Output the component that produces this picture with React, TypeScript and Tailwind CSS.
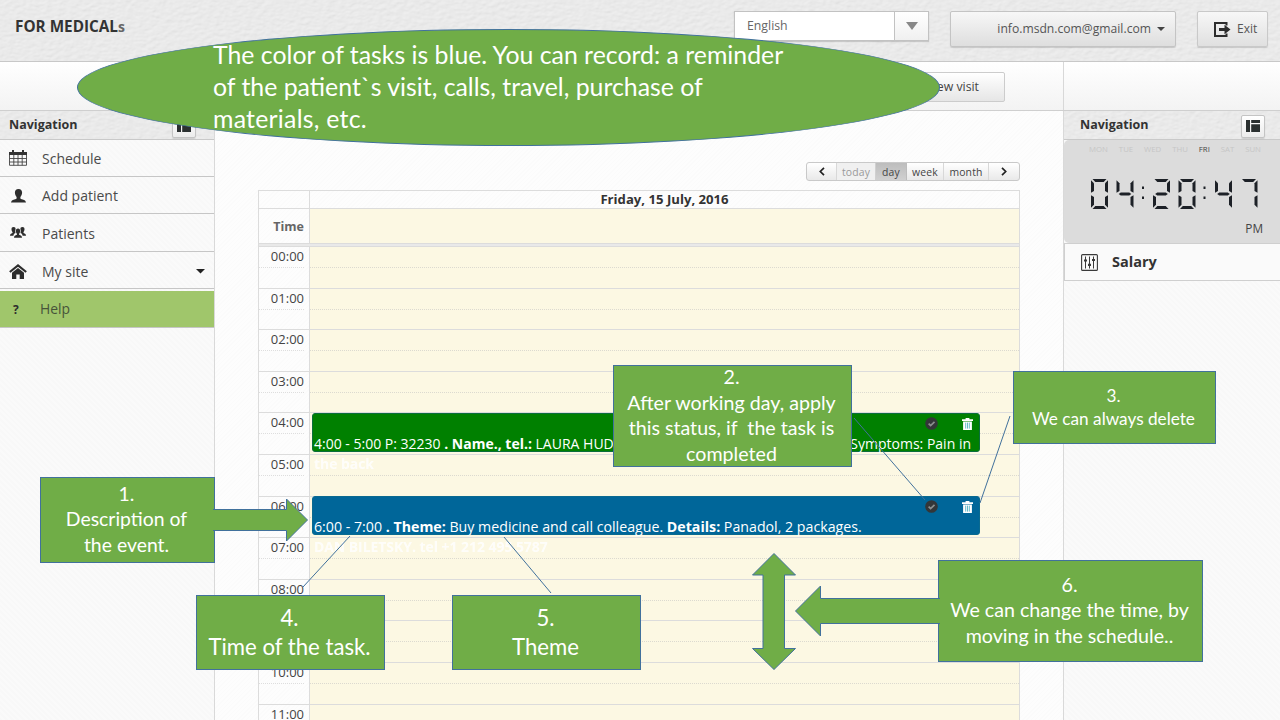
import type { ReactNode } from "react";

function Leather({ id }: { id: string }) {
  return (
    <svg className="absolute inset-0 h-full w-full" aria-hidden="true">
      <filter id={id} x="0" y="0" width="100%" height="100%">
        <feTurbulence type="fractalNoise" baseFrequency="0.16 0.28" numOctaves="2" seed="4" result="noise" />
        <feDiffuseLighting in="noise" lightingColor="#ffffff" surfaceScale="0.7" diffuseConstant="1.05">
          <feDistantLight azimuth="235" elevation="58" />
        </feDiffuseLighting>
      </filter>
      <rect width="100%" height="100%" fill="#e6e6e6" />
      <rect width="100%" height="100%" filter={`url(#${id})`} opacity="0.35" />
    </svg>
  );
}

function CalendarIcon() {
  return (
    <svg width="18" height="16" viewBox="0 0 18 16" fill="#333">
      <path d="M0 2h3V0h2v2h8V0h2v2h3v3H0z" />
      <path d="M.5 5v10.300h17V5M.5 8.500h17M.5 12h17M4.800 5v10.300M9 5v10.300M13.200 5v10.300" fill="none" stroke="#444" strokeWidth=".9" />
    </svg>
  );
}

function PersonIcon() {
  return (
    <svg width="15" height="14" viewBox="0 0 15 14" fill="#2d2d2d">
      <path d="M7.500 0C9.900 0 11.100 1.500 11.100 3.600c0 1.700-.8 3.500-1.700 4.400v1.200c0 .6 1 .9 2.300 1.300 2 .6 3 1.200 3.300 3.100H0c.3-1.900 1.300-2.500 3.300-3.100 1.300-.4 2.300-.7 2.300-1.300V8C4.700 7.100 3.900 5.300 3.900 3.600 3.900 1.500 5.100 0 7.500 0z" />
    </svg>
  );
}

function PeopleIcon() {
  return (
    <svg width="16" height="12" viewBox="0 0 16 12" fill="#2d2d2d">
      <path d="M3.600 0c1.500 0 2 .9 2 2.200-.6.900-.6 2.300 0 3.800-1 .4-1.900.8-2.200 2.700H0C0 7 .9 6.600 2.500 6V5C1.900 4.400 1.500 3.400 1.500 2.300 1.500.9 2.100 0 3.600 0z" />
      <path d="M12.400 0c-1.500 0-2 .9-2 2.200.6.900.6 2.300 0 3.800 1 .4 1.900.8 2.200 2.700H16C16 7 15.100 6.600 13.500 6V5c.6-.6 1-1.600 1-2.700C14.500.9 13.900 0 12.400 0z" />
      <path d="M8 1.500c1.500 0 2.200 1 2.200 2.500 0 1.200-.5 2.200-1.100 2.800v1c1.600.6 2.900 1 2.900 3H4c0-2 1.300-2.400 2.900-3v-1C6.300 6.200 5.800 5.200 5.800 4c0-1.500.7-2.500 2.200-2.500z" />
    </svg>
  );
}

function HomeIcon() {
  return (
    <svg width="18" height="15" viewBox="0 0 18 15">
      <path d="M.8 8 9 1.400 17.200 8" fill="none" stroke="#2d2d2d" strokeWidth="2.100" />
      <path d="M3 8.800 9 4l6 4.800V15h-4.300v-4.500H7.300V15H3z" fill="#2d2d2d" />
    </svg>
  );
}

function PanelIcon() {
  return (
    <svg width="14" height="12" viewBox="0 0 14 12" fill="#2b3030">
      <path d="M0 0h4v12H0zM5.200 0H14v3H5.200zM5.200 4.200H14V12H5.200z" />
    </svg>
  );
}

function ExitIcon() {
  return (
    <svg width="17" height="15" viewBox="0 0 17 15">
      <path d="M12.500 3.600V1H1v13h11.500v-2.600" fill="none" stroke="#2d2d2d" strokeWidth="2" />
      <path d="M5 5.900h5.500V2.800l6 4.700-6 4.700V9.100H5z" fill="#2d2d2d" />
    </svg>
  );
}

function SlidersIcon() {
  return (
    <svg width="17" height="17" viewBox="0 0 17 17" fill="none" stroke="#3a3a3a">
      <rect x=".6" y=".6" width="15.800" height="15.800" rx="1" strokeWidth="1.100" />
      <path d="M4.500 2.500v12M8.500 2.500v12M12.500 2.500v12" strokeWidth="1" />
      <path d="M3 6.500h3M7 10.800h3M11 6h3" strokeWidth="2.200" />
    </svg>
  );
}

function CheckIcon() {
  return (
    <svg width="13" height="13" viewBox="0 0 13 13">
      <circle cx="6.500" cy="6.500" r="6.300" fill="#333638" />
      <path d="m3.600 6.700 2 1.800 3.900-3.600" fill="none" stroke="#8b8f8f" strokeWidth="1.700" />
    </svg>
  );
}

function TrashIcon() {
  return (
    <svg width="11" height="12" viewBox="0 0 11 12">
      <path d="M3.600 0h3.800v1.200H11v1.900H0V1.200h3.600zM1.100 3.600h8.800V12H1.100z" fill="#fff" />
      <path d="M3.700 4.600v6M5.500 4.600v6M7.300 4.600v6" stroke="#3fa9bd" strokeWidth=".8" />
    </svg>
  );
}

function NavHeader({ id, gap }: { id: string; gap: string }) {
  return (
    <div className={`relative flex h-[29px] items-center justify-between border-b border-[#c9c9c9] ${gap}`}>
      <Leather id={id} />
      <span className="relative text-[12.5px] font-bold text-[#333]">Navigation</span>
      <span className="relative mt-[2px] flex h-[23px] w-[24px] items-center justify-center rounded-[2px] border border-[#c4c4c4] bg-linear-to-b from-white to-[#ececec] shadow-[0_1px_1px_rgba(0,0,0,0.12)]">
        <PanelIcon />
      </span>
    </div>
  );
}

function NavItem({ icon, label, arrow }: { icon: ReactNode; label: string; arrow?: boolean }) {
  return (
    <li className="flex h-[37.6px] items-center border-b border-[#c6c6c6] pt-[2px] pr-[9px] pl-[9px] text-[14px] text-[#4a4a4a]">
      <span className="flex w-[33px] items-center">{icon}</span>
      <span className="flex-1">{label}</span>
      {arrow && (
        <svg width="9" height="5" viewBox="0 0 9 5">
          <path d="M0 0h9L4.500 4.500z" fill="#222" />
        </svg>
      )}
    </li>
  );
}

const SEGMENTS: Record<string, string> = {
  a: "M1.500 0h14l-2.800 3H4.300z",
  b: "M17 1.200v12.600l-3-1.800V4.200z",
  c: "M17 16.200v12.600l-3-3V18z",
  d: "M1.500 30h14l-2.800-3H4.300z",
  e: "M0 16.200v12.600l3-3V18z",
  f: "M0 1.200v12.600L3 12V4.200z",
  g: "M2.200 15l2-1.500h8.600l2 1.500-2 1.500H4.200z",
};
const DIGITS: Record<string, string> = { "0": "abcdef", "2": "abged", "4": "fgbc", "7": "abc" };

function Clock() {
  const glyphs: [string, number][] = [
    ["0", 0], ["4", 25.500], ["2", 62], ["0", 87.500], ["4", 124], ["7", 149.500],
  ];
  return (
    <svg width="167" height="30" viewBox="0 0 167 30" fill="#1d2127" role="img" aria-label="04:20:47">
      {glyphs.map(([digit, x], i) => (
        <g key={i} transform={`translate(${x} 0)`}>
          {DIGITS[digit].split("").map((s) => (
            <path key={s} d={SEGMENTS[s]} />
          ))}
        </g>
      ))}
      <path d="M51 7.500h2v2.500h-2zM51 17.500h2v2.500h-2zM112.500 7.500h2v2.500h-2zM112.500 17.500h2v2.500h-2z" />
    </svg>
  );
}

const HOURS = ["00:00", "01:00", "02:00", "03:00", "04:00", "05:00", "06:00", "07:00", "08:00", "09:00", "10:00", "11:00"];

function CalendarEvent({ place, children, overflow }: { place: string; children: ReactNode; overflow: string }) {
  return (
    <div className={`absolute left-[53px] h-[39px] w-[668px] rounded-[3px] border whitespace-pre text-white ${place}`}>
      <div className="flex h-full flex-col justify-between">
        <div className="flex h-[19px] items-center justify-end gap-[24px] pr-[6px]">
          <CheckIcon />
          <TrashIcon />
        </div>
        <div className="flex h-[15px] items-center justify-between pr-[8px] pl-px leading-[18px]">{children}</div>
      </div>
      <div className="absolute top-[41px] left-px text-[13.900px] leading-[18px] font-bold opacity-85">{overflow}</div>
    </div>
  );
}

function Callout({ place, children }: { place: string; children: ReactNode }) {
  return (
    <div className={`absolute flex flex-col items-center justify-center border border-[#41719c] bg-[#70ad47] pr-[2px] pb-[2px] text-center font-['Lato',sans-serif] whitespace-pre text-white ${place}`}>
      {children}
    </div>
  );
}

export default function App() {
  return (
    <div className="relative flex h-[720px] w-[1280px] flex-col overflow-hidden bg-[#fcfcfc] font-['Open_Sans','Noto_Sans',sans-serif] text-[#444]">
      <header className="relative flex h-[62px] shrink-0 items-start border-b border-[#c8c8c8]">
        <Leather id="leather-top" />
        <h1 className="relative mt-[15px] ml-[15px] flex-1 text-[15.300px] leading-[23px] font-bold text-[#333]">
          FOR MEDICAL<span className="text-[14px] text-[#666]">s</span>
        </h1>
        <div className="relative mt-[11px] flex h-[30px] w-[195px] items-center border border-[#c2c2c2] bg-white shadow-[0_1px_1px_rgba(0,0,0,0.15)]">
          <span className="flex-1 pt-px pl-[12px] text-[12.300px] text-[#666]">English</span>
          <span className="flex h-full w-[34px] items-center justify-center border-l border-[#c2c2c2] bg-linear-to-b from-white to-[#f0f0f0]">
            <svg width="12" height="8" viewBox="0 0 12 8">
              <path d="M0 0h12L6 8z" fill="#888" />
            </svg>
          </span>
        </div>
        <div className="relative mt-[11px] ml-[21px] flex h-[36px] w-[226px] items-center justify-end gap-[6px] rounded-[2px] border border-[#c4c4c4] bg-linear-to-b from-[#f7f7f7] to-[#dedede] pr-[10px] shadow-[0_1px_1px_rgba(0,0,0,0.15)]">
          <span className="text-[12.150px] text-[#555]">info.msdn.com@gmail.com</span>
          <svg width="8" height="4" viewBox="0 0 8 4">
            <path d="M0 0h8L4 4z" fill="#444" />
          </svg>
        </div>
        <div className="relative mt-[11px] mr-[12px] ml-[21px] flex h-[36px] w-[71px] items-center gap-[6px] rounded-[2px] border border-[#c9c9c9] bg-linear-to-b from-[#f7f7f7] to-[#e0e0e0] pl-[16px] shadow-[0_1px_1px_rgba(0,0,0,0.15)]">
          <ExitIcon />
          <span className="text-[12px] text-[#555]">Exit</span>
        </div>
      </header>

      <div className="flex h-[49px] shrink-0 border-b border-[#cfcfcf] bg-linear-to-b from-white to-[#f3f3f3]">
        <div className="flex flex-1 items-start justify-end pr-[58px]">
          <button className="mt-[10px] h-[30px] w-[106px] rounded-[2px] border border-[#cccccc] bg-linear-to-b from-white to-[#e6e6e6] pr-[25px] text-right text-[12.300px] text-[#444]">
            New visit
          </button>
        </div>
        <div className="w-[217px] border-l border-[#d8d8d8]" />
      </div>

      <div className="flex min-h-0 flex-1">
        <aside className="w-[215px] shrink-0 border-r border-[#d9d9d9] bg-[repeating-linear-gradient(45deg,#f8f8f8_0px,#f8f8f8_2px,#fafafa_2px,#fafafa_4px)]">
          <NavHeader id="leather-left" gap="pl-[9px] pr-[18px]" />
          <ul className="-mt-px">
            <NavItem icon={<CalendarIcon />} label="Schedule" />
            <NavItem icon={<span className="pl-[2px]"><PersonIcon /></span>} label="Add patient" />
            <NavItem icon={<span className="pl-px"><PeopleIcon /></span>} label="Patients" />
            <NavItem icon={<HomeIcon />} label="My site" arrow />
          </ul>
          <div className="mt-[2px] flex h-[37px] items-center border-b border-[#c6c6c6] bg-[#a0c66b] pt-px pl-[13px] text-[13.900px] text-[#47543a]">
            <span className="w-[27px] text-[12px] font-bold text-[#2d2d2d]">?</span>Help
          </div>
        </aside>

        <main className="min-w-0 flex-1 overflow-hidden bg-[repeating-linear-gradient(135deg,#fdfdfd_0px,#fdfdfd_2px,#fbfbfb_2px,#fbfbfb_3px)] pr-[43px] pl-[43px]">
          <div className="mt-[51px] ml-auto flex h-[19px] w-[214px] rounded-[3px] border border-[#c9c9c9] bg-linear-to-b from-white to-[#e9e9e9] text-[10.400px] leading-[19px] tracking-[0.150px] text-[#444]">
            <span className="flex w-[30px] items-center justify-center border-r border-[#d8d8d8]">
              <svg width="6" height="9" viewBox="0 0 6 9" fill="none" stroke="#222" strokeWidth="1.700"><path d="M5 .8 1.300 4.500 5 8.200" /></svg>
            </span>
            <span className="w-[39px] border-r border-[#d0d0d0] bg-[#f0f0f0] text-center text-[#999]">today</span>
            <span className="w-[31px] border-r border-[#bdbdbd] bg-linear-to-b from-[#bdbdbd] to-[#d0d0d0] text-center">day</span>
            <span className="w-[37px] border-r border-[#d8d8d8] text-center">week</span>
            <span className="w-[45px] border-r border-[#d8d8d8] text-center">month</span>
            <span className="flex flex-1 items-center justify-center">
              <svg width="6" height="9" viewBox="0 0 6 9" fill="none" stroke="#222" strokeWidth="1.700"><path d="M1 .8 4.700 4.500 1 8.200" /></svg>
            </span>
          </div>

          <section className="relative mt-[9px] border border-[#dcdcdc]">
            <div className="flex h-[18px] border-b border-[#dcdcdc]">
              <div className="w-[51px] border-r border-[#dcdcdc]" />
              <div className="flex-1 text-center text-[13.150px] leading-[17px] font-bold text-[#333]">Friday, 15 July, 2016</div>
            </div>
            <div className="flex h-[34px]">
              <div className="flex w-[51px] items-center justify-end border-r border-[#dcdcdc] pt-[3px] pr-[5px] text-[12.500px] font-bold text-[#666]">Time</div>
              <div className="flex-1 bg-[#fcf8e3]" />
            </div>
            <div className="h-[4px] border-y border-[#dcdcdc] bg-[#e9e9e9]" />
            {HOURS.map((hour) => (
              <div key={hour} className="flex h-[41.600px] border-b border-[#dcdcdc] text-[13px] leading-[19.500px] text-[#444]">
                <div className="w-[51px] border-r border-[#dcdcdc] pr-[5px] text-right">
                  <div className="h-[21px] border-b border-dotted border-[#dedede]">{hour}</div>
                </div>
                <div className="flex-1 bg-[#fcf8e3]">
                  <div className="h-[21px] border-b border-dotted border-[#dcdad0]" />
                </div>
              </div>
            ))}
            <CalendarEvent place="top-[222px] border-[#0a6e3c] bg-[#008000] text-[14px]" overflow="the back">
              <span>4:00 - 5:00 P: 32230 <b>. Name., tel.:</b> LAURA HUDSON</span>
              <span>Symptoms: Pain in</span>
            </CalendarEvent>
            <CalendarEvent place="top-[305px] border-[#0a6a90] bg-[#006699] text-[14.200px]" overflow="DAN BILETSKY. tel +1 212 495 5787">
              <span>6:00 - 7:00 <b>. Theme:</b> Buy medicine and call colleague. <b>Details:</b> Panadol, 2 packages.</span>
            </CalendarEvent>
          </section>
        </main>

        <aside className="w-[217px] shrink-0 border-l border-[#d9d9d9] bg-[repeating-linear-gradient(45deg,#f8f8f8_0px,#f8f8f8_2px,#fafafa_2px,#fafafa_4px)]">
          <NavHeader id="leather-right" gap="pl-[16px] pr-[15px]" />
          <div className="flex h-[103px] flex-col rounded-l-[5px] bg-[#dcdcdc]">
            <div className="mt-[2px] flex justify-between pr-[19px] pl-[25px] text-[7.800px] leading-[14px] text-[#c6c6c6]">
              <span>MON</span><span>TUE</span><span>WED</span><span>THU</span>
              <span className="text-[#444]">FRI</span><span>SAT</span><span>SUN</span>
            </div>
            <div className="mt-[23px] pl-[27px]"><Clock /></div>
            <div className="mt-[11px] pr-[17px] text-right text-[11.800px] leading-[16px]">PM</div>
          </div>
          <div className="flex h-[38px] items-center gap-[14px] border-y border-l border-[#cfcfcf] bg-[#fafafa] pl-[16px] text-[14.500px] font-bold text-[#333]">
            <SlidersIcon />
            <span className="pb-px">Salary</span>
          </div>
        </aside>
      </div>

      <div className="absolute top-[29px] left-[77px] h-[117px] w-[863px] rounded-[50%] border border-[#41719c] bg-[#70ad47]" />
      <p className="absolute top-[38px] left-[213px] font-['Lato',sans-serif] text-[24.850px] leading-[32px] whitespace-pre text-white">
        The color of tasks is blue. You can record: a reminder<br />
        of the patient`s visit, calls, travel, purchase of<br />
        <span className="tracking-[0.250px]">materials, etc.</span>
      </p>

      <Callout place="left-[40px] top-[477px] h-[86px] w-[175px] text-[19.400px] leading-[25.500px]">
        <span>1.</span><span>Description of</span><span>the event.</span>
      </Callout>
      <Callout place="left-[613px] top-[365px] h-[102px] w-[239px] text-[19.650px] leading-[25.500px]">
        <span>2.</span><span>After working day, apply</span><span>this status, if  the task is</span><span>completed</span>
      </Callout>
      <Callout place="left-[1013px] top-[371px] h-[73px] w-[203px] text-[17.200px] leading-[23px]">
        <span>3.</span><span>We can always delete</span>
      </Callout>
      <Callout place="left-[196px] top-[595px] h-[75px] w-[189px] text-[22.200px] leading-[29px]">
        <span>4.</span><span>Time of the task.</span>
      </Callout>
      <Callout place="left-[452px] top-[595px] h-[75px] w-[189px] text-[22.200px] leading-[29px]">
        <span>5.</span><span>Theme</span>
      </Callout>
      <Callout place="left-[938px] top-[560px] h-[102px] w-[265px] text-[19.650px] leading-[25.500px]">
        <span>6.</span><span>We can change the time, by</span><span>moving in the schedule..</span>
      </Callout>

      <svg className="pointer-events-none absolute inset-0" width="1280" height="720" viewBox="0 0 1280 720" fill="#70ad47" stroke="#41719c" strokeWidth="1">
        <path d="M213 509.500h73.500v-10.500L307.500 520 286.500 541v-10.500H213" />
        <path d="M940 598.500H820.500V586L795.500 611l25 25v-12.500H940" />
        <path d="M774 553.500l21.500 21.500H784.500v73.500h11L774 669.500 752.500 648.500h10.500V575h-10.500z" />
        <path d="M350 536 303 587M504 537l47 56M854 418l71 82M1010 416l-30 87" fill="none" />
      </svg>
    </div>
  );
}
